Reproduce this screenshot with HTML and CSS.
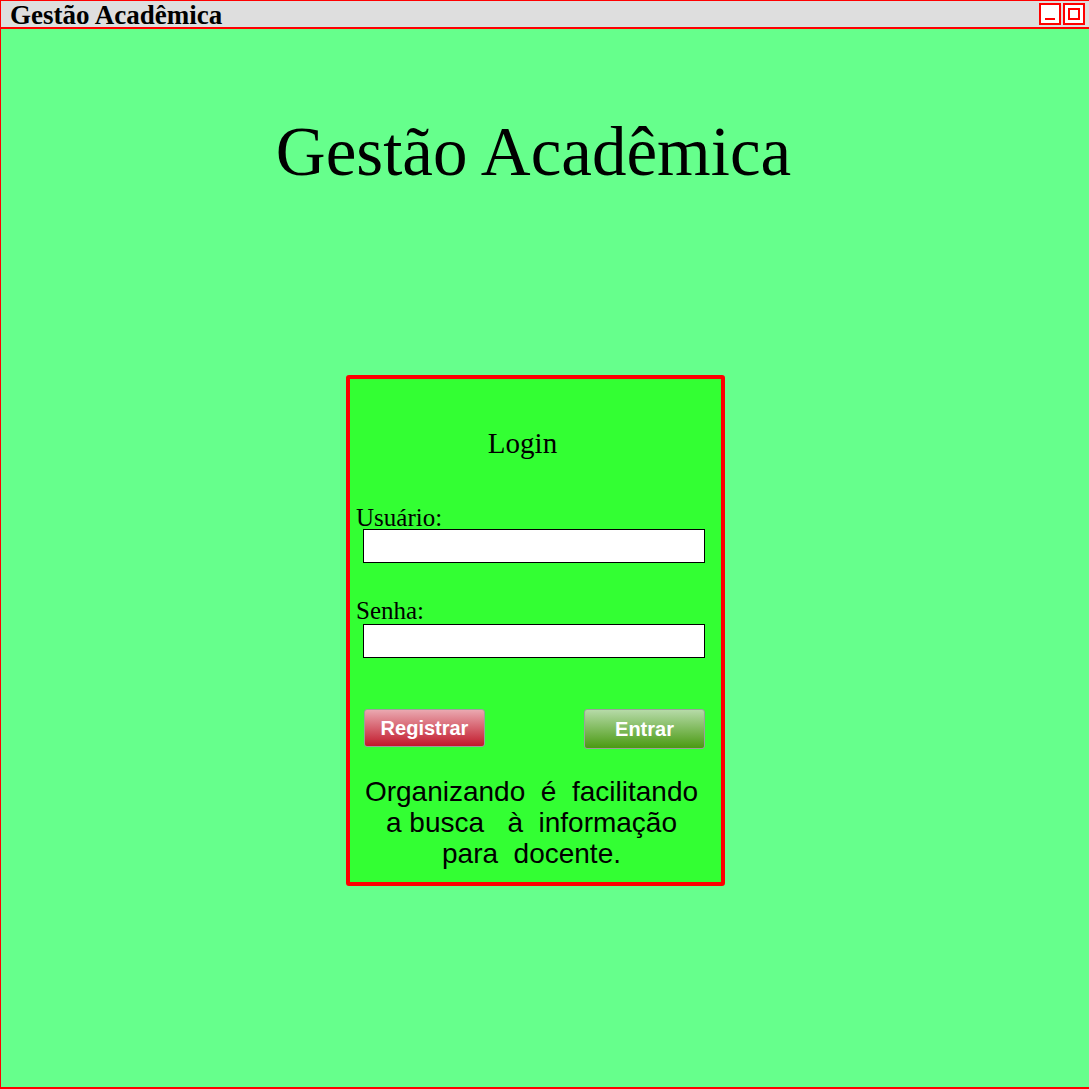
FILE: index.html
```html
<!DOCTYPE html>
<html lang="pt">
<head>
<meta charset="utf-8">
<title>Gestão Acadêmica</title>
<link rel="stylesheet" href="styles.css">
</head>
<body>
<div class="window">
  <div class="titlebar">
    <span class="titlebar-text">Gestão Acadêmica</span>
    <div class="controls">
      <span class="ctl ctl-min"><span class="min-line"></span></span>
      <span class="ctl ctl-max"><span class="max-box"></span></span>
    </div>
  </div>
  <main class="main">
    <h1 class="heading">Gestão Acadêmica</h1>
    <section class="card">
      <h2 class="card-title">Login</h2>
      <div class="field">
        <label class="label">Usuário:</label>
        <input class="input" type="text">
      </div>
      <div class="field field-second">
        <label class="label">Senha:</label>
        <input class="input" type="password">
      </div>
      <div class="actions">
        <button class="btn btn-red">Registrar</button>
        <button class="btn btn-green">Entrar</button>
      </div>
      <p class="tagline">Organizando  é  facilitando
a busca   à  informação
para  docente.</p>
    </section>
  </main>
</div>
</body>
</html>
```
FILE: styles.css
```css
html, body {
  margin: 0;
  padding: 0;
  overflow: hidden;
  width: 1089px;
  height: 1089px;
}
.window {
  width: 1090px;
  height: 1089px;
  box-sizing: border-box;
  border: 1px solid #ff0000;
  border-bottom-width: 2px;
  background: #66ff8c;
  display: flex;
  flex-direction: column;
}
.titlebar {
  height: 26px;
  background: #dedede;
  border-bottom: 2px solid #ff0000;
  display: flex;
  align-items: flex-start;
  justify-content: space-between;
}
.titlebar-text {
  font-family: "Liberation Serif", serif;
  font-weight: bold;
  font-size: 27px;
  line-height: 26px;
  padding-left: 9px;
  padding-top: 1px;
  color: #000;
}
.controls {
  display: flex;
  gap: 2px;
  padding-top: 2px;
  padding-right: 4px;
}
.ctl {
  width: 22px;
  height: 22px;
  box-sizing: border-box;
  border: 2px solid #ff0000;
  background: #fff;
  display: flex;
  align-items: center;
  justify-content: center;
}
.min-line {
  width: 10px;
  height: 2px;
  background: #ff0000;
  margin-top: 10px;
}
.max-box {
  width: 12px;
  height: 12px;
  box-sizing: border-box;
  border: 2px solid #ff0000;
}
.main {
  flex: 1;
  display: flex;
  flex-direction: column;
  align-items: center;
  padding-right: 19px;
}
.heading {
  margin: 84px 4px 0 0;
  font-family: "Liberation Serif", serif;
  font-weight: normal;
  font-size: 69px;
  line-height: 78px;
  color: #000;
}
.card {
  margin-top: 184px;
  width: 379px;
  height: 511px;
  box-sizing: border-box;
  border: 4px solid #ff0000;
  border-radius: 3px;
  background: #33ff33;
  display: flex;
  flex-direction: column;
  padding: 0 0 0 6px;
}
.card-title {
  margin: 48px 0 0 0;
  padding-right: 32px;
  text-align: center;
  font-family: "Liberation Serif", serif;
  font-weight: normal;
  font-size: 29px;
  line-height: 32px;
}
.field {
  margin-top: 48px;
  display: flex;
  flex-direction: column;
}
.field-second {
  margin-top: 37px;
}
.label {
  font-family: "Liberation Serif", serif;
  font-size: 25px;
  line-height: 22px;
  color: #000;
}
.input {
  margin: 0 16px 0 7px;
  height: 34px;
  box-sizing: border-box;
  border: 1px solid #000;
  background: #fff;
  padding: 0;
}
.field-second .input {
  margin-top: 2px;
}
.actions {
  margin: 51px 16px 0 8px;
  display: flex;
  justify-content: space-between;
  align-items: flex-start;
}
.btn {
  width: 121px;
  height: 38px;
  border: 1px solid #9aa09a;
  border-radius: 3px;
  color: #fff;
  font-family: "Liberation Sans", Arial, sans-serif;
  font-weight: bold;
  font-size: 20px;
  padding: 0;
}
.btn-red {
  background: linear-gradient(#eaa8b0, #c21a2c);
}
.btn-green {
  height: 40px;
  background: linear-gradient(#b6daa8, #4a9a12);
}
.tagline {
  margin: 27px 0 0 0;
  padding-right: 14px;
  white-space: pre;
  text-align: center;
  font-family: "Liberation Sans", Arial, sans-serif;
  font-size: 28px;
  line-height: 31px;
  color: #000;
}
```
